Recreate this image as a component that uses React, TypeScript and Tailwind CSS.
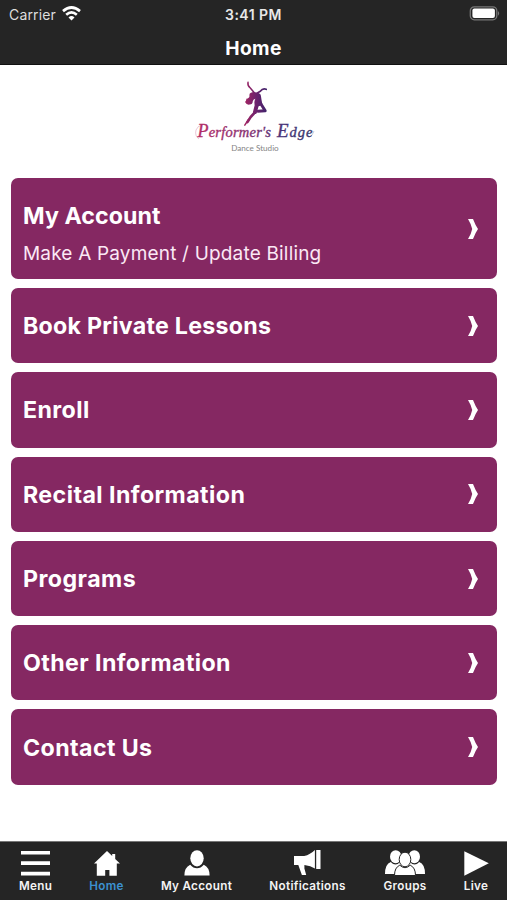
import type { ReactNode } from "react";

const items = [
  { title: "Book Private Lessons", tracking: "tracking-[0.27px]" },
  { title: "Enroll", tracking: "tracking-[0.4px]" },
  { title: "Recital Information", tracking: "tracking-[0.43px]" },
  { title: "Programs", tracking: "tracking-[0.45px]" },
  { title: "Other Information", tracking: "tracking-[0.4px]" },
  { title: "Contact Us", tracking: "tracking-[0.4px]" },
];

function Chevron() {
  return (
    <svg className="block h-5 w-[10px] shrink-0" viewBox="0 0 10 20" fill="#fff">
      <path d="M0 0H5Q7.5 6.5 10 10Q7.5 13.5 5 20H0Q3.4 14.5 4.2 10Q3.4 5.5 0 0Z" />
    </svg>
  );
}

function Card({ title, subtitle, tracking }: { title: string; subtitle?: string; tracking: string }) {
  return (
    <button
      className={`flex w-full items-center justify-between rounded-[7px] bg-[#852862] pl-3 pr-[19px] text-left text-white ${
        subtitle ? "h-[101px]" : "h-[75.3px]"
      }`}
    >
      <span className={`flex flex-col whitespace-nowrap ${subtitle ? "pt-[13px]" : "pt-px"}`}>
        <span className={`text-[23.2px] leading-[30px] font-bold ${tracking}`}>{title}</span>
        {subtitle && (
          <span className="mt-2 text-[19px] leading-[30px] tracking-[0.18px] text-[#fbe8f5]">{subtitle}</span>
        )}
      </span>
      <Chevron />
    </button>
  );
}

function Tab({
  label,
  width,
  active,
  children,
}: {
  label: string;
  width: string;
  active?: boolean;
  children: ReactNode;
}) {
  return (
    <button className={`flex shrink-0 flex-col items-center ${width}`}>
      <span className="flex h-[27px] items-end justify-center">{children}</span>
      <span
        className={`mt-[2px] text-[11.7px] leading-[14px] font-semibold tracking-[0.3px] whitespace-nowrap ${
          active ? "text-[#3c91d0]" : "text-[#f4f4f4]"
        }`}
      >
        {label}
      </span>
    </button>
  );
}

function Logo() {
  return (
    <svg className="block h-[80px] w-[130px]" viewBox="188 76 130 80">
      <defs>
        <linearGradient id="word" gradientUnits="userSpaceOnUse" x1="195" y1="0" x2="313" y2="0">
          <stop offset="0" stopColor="#b52c66" />
          <stop offset="0.45" stopColor="#843071" />
          <stop offset="0.75" stopColor="#483579" />
          <stop offset="1" stopColor="#343468" />
        </linearGradient>
        <linearGradient id="dancer" gradientUnits="userSpaceOnUse" x1="243" y1="0" x2="267" y2="0">
          <stop offset="0" stopColor="#a62562" />
          <stop offset="0.5" stopColor="#6e226d" />
          <stop offset="1" stopColor="#39236a" />
        </linearGradient>
      </defs>
      <g fill="none" stroke="url(#dancer)" strokeLinecap="round" strokeLinejoin="round">
        <path d="M247 82.3Q246.3 85.5 249.3 88L253.5 93" strokeWidth="1.5" />
        <path d="M265.2 89.3Q261.8 87.8 259.3 91.3L255.5 93.5" strokeWidth="1.7" />
        <path d="M259.3 103L264.2 110.8L256.8 111.2" strokeWidth="3" />
        <path d="M255.8 105L254 112" strokeWidth="4" />
        <path d="M253.8 112.5Q249 117 246.5 122" strokeWidth="2.7" />
        <path d="M247.5 119.5L243.8 125.2" strokeWidth="1.5" />
      </g>
      <path
        fill="url(#dancer)"
        d="M250 92.8Q252.5 91.3 255.5 92.8Q259.8 92.8 260 96.5Q260.5 100 261.3 104Q258.5 107.5 254.2 106Q252.5 103 254.3 98.8Q252 99.3 251.8 101.3Q251.5 104.8 248.5 104.6Q245.8 105.3 244 102Q245.5 101 245.3 98.8Q248.5 98.2 248.5 96Q248 93.5 250 92.8Z"
      />
      <g
        fill="url(#word)"
        stroke="url(#word)"
        strokeWidth="0.35"
        fontFamily="'Liberation Serif', serif"
        fontStyle="italic"
        fontSize="14.5"
      >
        <text x="196.5" y="137.3" textLength="73.5" lengthAdjust="spacing">
          <tspan fontSize="18">P</tspan>erformer's
        </text>
        <text x="276" y="137.3" textLength="35.5" lengthAdjust="spacing">
          <tspan fontSize="19">E</tspan>dge
        </text>
      </g>
      <path
        d="M198 139Q193.5 136 195 130Q197 125 201 125.5M307 136.5Q310 138.5 313 131"
        fill="none"
        stroke="url(#word)"
        strokeWidth="0.6"
        opacity="0.45"
      />
      <text
        x="230.2"
        y="151"
        fill="#858585"
        fontFamily="Lato, sans-serif"
        fontSize="8.2"
        textLength="47.5"
        lengthAdjust="spacingAndGlyphs"
      >
        Dance Studio
      </text>
    </svg>
  );
}

export default function App() {
  return (
    <div className="flex h-[900px] w-[507px] flex-col overflow-hidden bg-white font-['Inter','Liberation_Sans',sans-serif]">
      <header className="h-[64.5px] shrink-0 border-b border-[#111] bg-[#252525] text-white">
        <div className="grid h-7 grid-cols-3 items-center">
          <div className="flex items-center gap-[6px] pl-[9px] text-[14px] tracking-[0.15px] text-[#dedede]">
            <span>Carrier</span>
            <svg className="-mt-[2px] h-[15px] w-[19px]" viewBox="0 0 19 15" fill="none" stroke="#fff" strokeWidth="2.7">
              <path d="M1 5.1Q9.5-2.1 18 5.1" />
              <path d="M4.2 8.7Q9.5 4.2 14.8 8.7" />
              <path d="M6.5 11.4Q9.5 8.8 12.5 11.4L9.5 14.5Z" fill="#fff" stroke="none" />
            </svg>
          </div>
          <span className="text-center text-[14px] font-semibold tracking-[0.45px] text-[#e8e8e8]">3:41 PM</span>
          <svg className="mr-[6px] h-4 w-[32px] justify-self-end" viewBox="0 0 32 16">
            <rect x="1.3" y="0.9" width="26.5" height="12.9" rx="4" fill="#252525" stroke="#777" strokeWidth="1.3" />
            <rect x="3.4" y="2.6" width="22.5" height="9.4" rx="2" fill="#fff" />
            <path d="M29 5Q31.4 7.4 29 9.7Z" fill="#777" />
          </svg>
        </div>
        <h1 className="mt-[7px] text-center text-[19.2px] leading-[27px] font-bold tracking-[0.4px]">Home</h1>
      </header>

      <main className="flex min-h-0 flex-1 flex-col">
        <div className="flex h-[113.5px] shrink-0 justify-center pt-[11.5px]">
          <Logo />
        </div>
        <div className="flex flex-col gap-[9px] pr-[10.5px] pl-[11px]">
          <Card title="My Account" subtitle="Make A Payment / Update Billing" tracking="tracking-[0.05px]" />
          {items.map((item) => (
            <Card key={item.title} {...item} />
          ))}
        </div>
      </main>

      <nav className="flex h-[59px] shrink-0 border-t border-[#777] bg-[#252525] pt-[8px]">
        <Tab label="Menu" width="w-[71px]">
          <svg className="mb-[1px] h-[26px] w-[29px]" viewBox="0 0 29 26" fill="#fff">
            <path d="M0 1H29V4.6H0ZM0 11.3H29V15H0ZM0 21.7H29V25.4H0Z" />
          </svg>
        </Tab>
        <Tab label="Home" width="w-[71px]" active>
          <svg className="mb-[1px] h-[25px] w-[26px]" viewBox="0 0 26 25" fill="#fff">
            <path d="M13 0L18.2 5V3H21.2V8L26 12.5H22.8V24.8H15.4V19H11.2V24.8H2.8V12.5H0Z" />
          </svg>
        </Tab>
        <Tab label="My Account" width="w-[109px]">
          <svg className="mb-[1px] h-[26px] w-[26px]" viewBox="0 0 26 26" fill="#fff">
            <ellipse cx="13" cy="8.3" rx="6.7" ry="8.1" />
            <path d="M6.2 14.7Q9.2 18.2 13 18.2T19.8 14.7Q25.6 17.3 25.6 25.5H.4Q.4 17.3 6.2 14.7Z" />
          </svg>
        </Tab>
        <Tab label="Notifications" width="w-[113px]">
          <svg className="mb-[1px] h-[26px] w-[27px]" viewBox="0 0 27 26" fill="#fff">
            <path d="M0 6H10.2Q16.2 4.7 20.9 0V18.5Q16.8 15.7 10.4 15V18.5L12.2 25H7.9L4.3 15H0ZM22.2 0H26.5V19H22.2Z" />
          </svg>
        </Tab>
        <Tab label="Groups" width="w-[82px]">
          <svg className="mb-[1px] h-[26px] w-[40px]" viewBox="0 0 40 26" fill="#fff">
            <ellipse cx="10.7" cy="6.7" rx="5.7" ry="6.5" />
            <ellipse cx="29.3" cy="6.7" rx="5.7" ry="6.5" />
            <path d="M5.8 12Q8 14.5 10.5 14.5T15 12L20 17V24H0Q0 14 5.8 12ZM34.2 12Q32 14.5 29.5 14.5T25 12L20 17V24H40Q40 14 34.2 12Z" />
            <path
              d="M14.8 15.2Q17.4 17.7 20 17.7T25.2 15.2Q30.5 17.5 30.5 25.5H9.5Q9.5 17.5 14.8 15.2Z"
              stroke="#252525"
              strokeWidth="1"
            />
            <ellipse cx="20" cy="9.5" rx="5.8" ry="7.3" stroke="#252525" strokeWidth="1" />
          </svg>
        </Tab>
        <Tab label="Live" width="w-[60px]">
          <svg className="mb-[1px] h-[25px] w-[25px]" viewBox="0 0 25 25" fill="#fff">
            <path d="M.3.2L24.8 12.3L.3 24.7Z" />
          </svg>
        </Tab>
      </nav>
    </div>
  );
}
